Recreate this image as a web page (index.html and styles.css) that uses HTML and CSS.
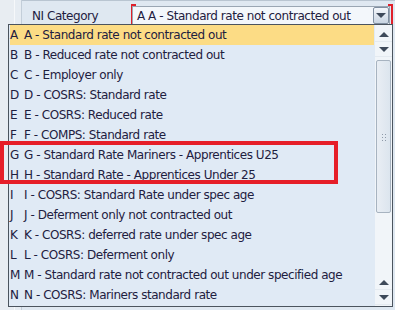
FILE: index.html
```html
<!DOCTYPE html>
<html>
    <head>
        <title>NI Category</title>
        <meta charset="utf-8"/>
        <link rel="stylesheet" href="styles.css">
    </head>
    <body>
        <div class="screen">
            <div class="side"></div>
            <div class="panel">
                <div class="field">
                    <span class="label">NI Category</span>
                    <div class="combo">
                        <span class="combo-text">A A - Standard rate not contracted out</span>
                        <span class="combo-btn"><span class="tri-down"></span></span>
                        <span class="focus-l"></span>
                        <span class="focus-r"></span>
                    </div>
                </div>
            </div>

            <div class="dropdown">
                <ul class="list">
                    <li class="row selected"><span class="key">A</span>A - Standard rate not contracted out</li>
                    <li class="row"><span class="key">B</span>B - Reduced rate not contracted out</li>
                    <li class="row"><span class="key">C</span>C - Employer only</li>
                    <li class="row"><span class="key">D</span>D - COSRS: Standard rate</li>
                    <li class="row"><span class="key">E</span>E - COSRS: Reduced rate</li>
                    <li class="row"><span class="key">F</span>F - COMPS: Standard rate</li>
                    <li class="row"><span class="key">G</span>G - Standard Rate Mariners - Apprentices U25</li>
                    <li class="row"><span class="key">H</span>H - Standard Rate - Apprentices Under 25</li>
                    <li class="row"><span class="key">I</span>I - COSRS: Standard Rate under spec age</li>
                    <li class="row"><span class="key">J</span>J - Deferment only not contracted out</li>
                    <li class="row"><span class="key">K</span>K - COSRS: deferred rate under spec age</li>
                    <li class="row"><span class="key">L</span>L - COSRS: Deferment only</li>
                    <li class="row"><span class="key">M</span>M - Standard rate not contracted out under specified age</li>
                    <li class="row"><span class="key">N</span>N - COSRS: Mariners standard rate</li>
                </ul>
                <div class="scrollbar">
                    <div class="sb-btn"><span class="tri-up"></span></div>
                    <div class="sb-btn"><span class="tri-down"></span></div>
                    <div class="sb-track">
                        <div class="sb-thumb"><span class="grip"></span></div>
                    </div>
                    <div class="sb-btn"><span class="tri-up"></span></div>
                    <div class="sb-btn"><span class="tri-down"></span></div>
                </div>
            </div>

            <div class="mark"></div>
        </div>
    </body>
</html>
```

FILE: styles.css
```css
* {
    box-sizing: border-box;
}
body, html {
    margin: 0;
    padding: 0;
    background: #e6ecf2;
    font-family: 'DejaVu Sans', Verdana, sans-serif;
    font-size: 12px;
    letter-spacing: -0.45px;
    color: #1e2040;
}
.screen {
    position: relative;
    width: 395px;
    height: 310px;
    overflow: hidden;
    display: flex;
}

.side {
    width: 22px;
    border-right: 1px solid #c3ced9;
    background: linear-gradient(to right, #e8edf2 0, #e8edf2 14px, #f6f8fa 14px, #f6f8fa 15px, #e6ecf2 15px);
}
.panel {
    flex: 1;
    background: #dfe8f1;
    border-top: 1px solid #b9c5d1;
}
.field {
    display: flex;
    align-items: center;
    height: 25px;
    padding-top: 4px;
}
.label {
    width: 110px;
    padding-left: 10px;
}

.combo {
    position: relative;
    width: 258px;
    height: 19px;
    display: flex;
    align-items: center;
    background: #f3f7fb;
    border: 1px solid #9aa6b3;
    padding-left: 4px;
}
.combo-text {
    flex: 1;
}
.combo-btn {
    width: 16px;
    height: 17px;
    display: flex;
    align-items: center;
    justify-content: center;
    border: 1px solid #7f8ea0;
    border-radius: 2px;
    background: linear-gradient(#f4f7fb, #c9d5e2);
}
/* focus brackets around the combo */
.focus-l, .focus-r {
    position: absolute;
    top: -3px;
    bottom: -3px;
    width: 5px;
    border: 0 solid #e0202a;
    border-top-width: 2px;
    border-bottom-width: 2px;
}
.focus-l {
    left: -2px;
    border-left-width: 1px;
}
.focus-r {
    right: -4px;
    border-right-width: 2px;
}

.tri-down, .tri-up {
    width: 0;
    height: 0;
    border-left: 5px solid transparent;
    border-right: 5px solid transparent;
}
.tri-down {
    border-top: 5px solid #3e4a5a;
}
.tri-up {
    border-bottom: 5px solid #3e4a5a;
}

.dropdown {
    position: absolute;
    left: 8px;
    top: 24px;
    width: 385px;
    height: 283px;
    display: flex;
    background: #e0eaf5;
    border: 1px solid #4b545e;
}
.list {
    flex: 1;
    margin: 0;
    padding: 0 0 0 1px;
    list-style: none;
}
.row {
    display: flex;
    align-items: center;
    height: 20px;
    padding-bottom: 1px;
    white-space: nowrap;
}
.row.selected {
    background: #fcdc85;
    margin-right: 1px;
}
.key {
    width: 14px;
}

.scrollbar {
    width: 17px;
    display: flex;
    flex-direction: column;
    background: #f1f5f9;
    padding: 2px 0 1px;
}
.sb-btn {
    height: 15px;
    display: flex;
    align-items: center;
    justify-content: center;
    border-bottom: 1px solid #e4eaf0;
}
.sb-track {
    flex: 1;
    padding: 3px 1px;
}
.sb-thumb {
    height: 153px;
    display: flex;
    align-items: center;
    justify-content: center;
    border: 1px solid #a7b3c0;
    border-radius: 2px;
    background: linear-gradient(to right, #e9eef4, #dce5ee);
}
.grip {
    width: 6px;
    height: 8px;
    background: radial-gradient(circle, #8e9aa8 0.8px, transparent 1px) 0 0 / 3px 3px;
}

.mark {
    position: absolute;
    left: 0;
    top: 141px;
    width: 338px;
    height: 43px;
    border: 4px solid #e61e28;
}
```
